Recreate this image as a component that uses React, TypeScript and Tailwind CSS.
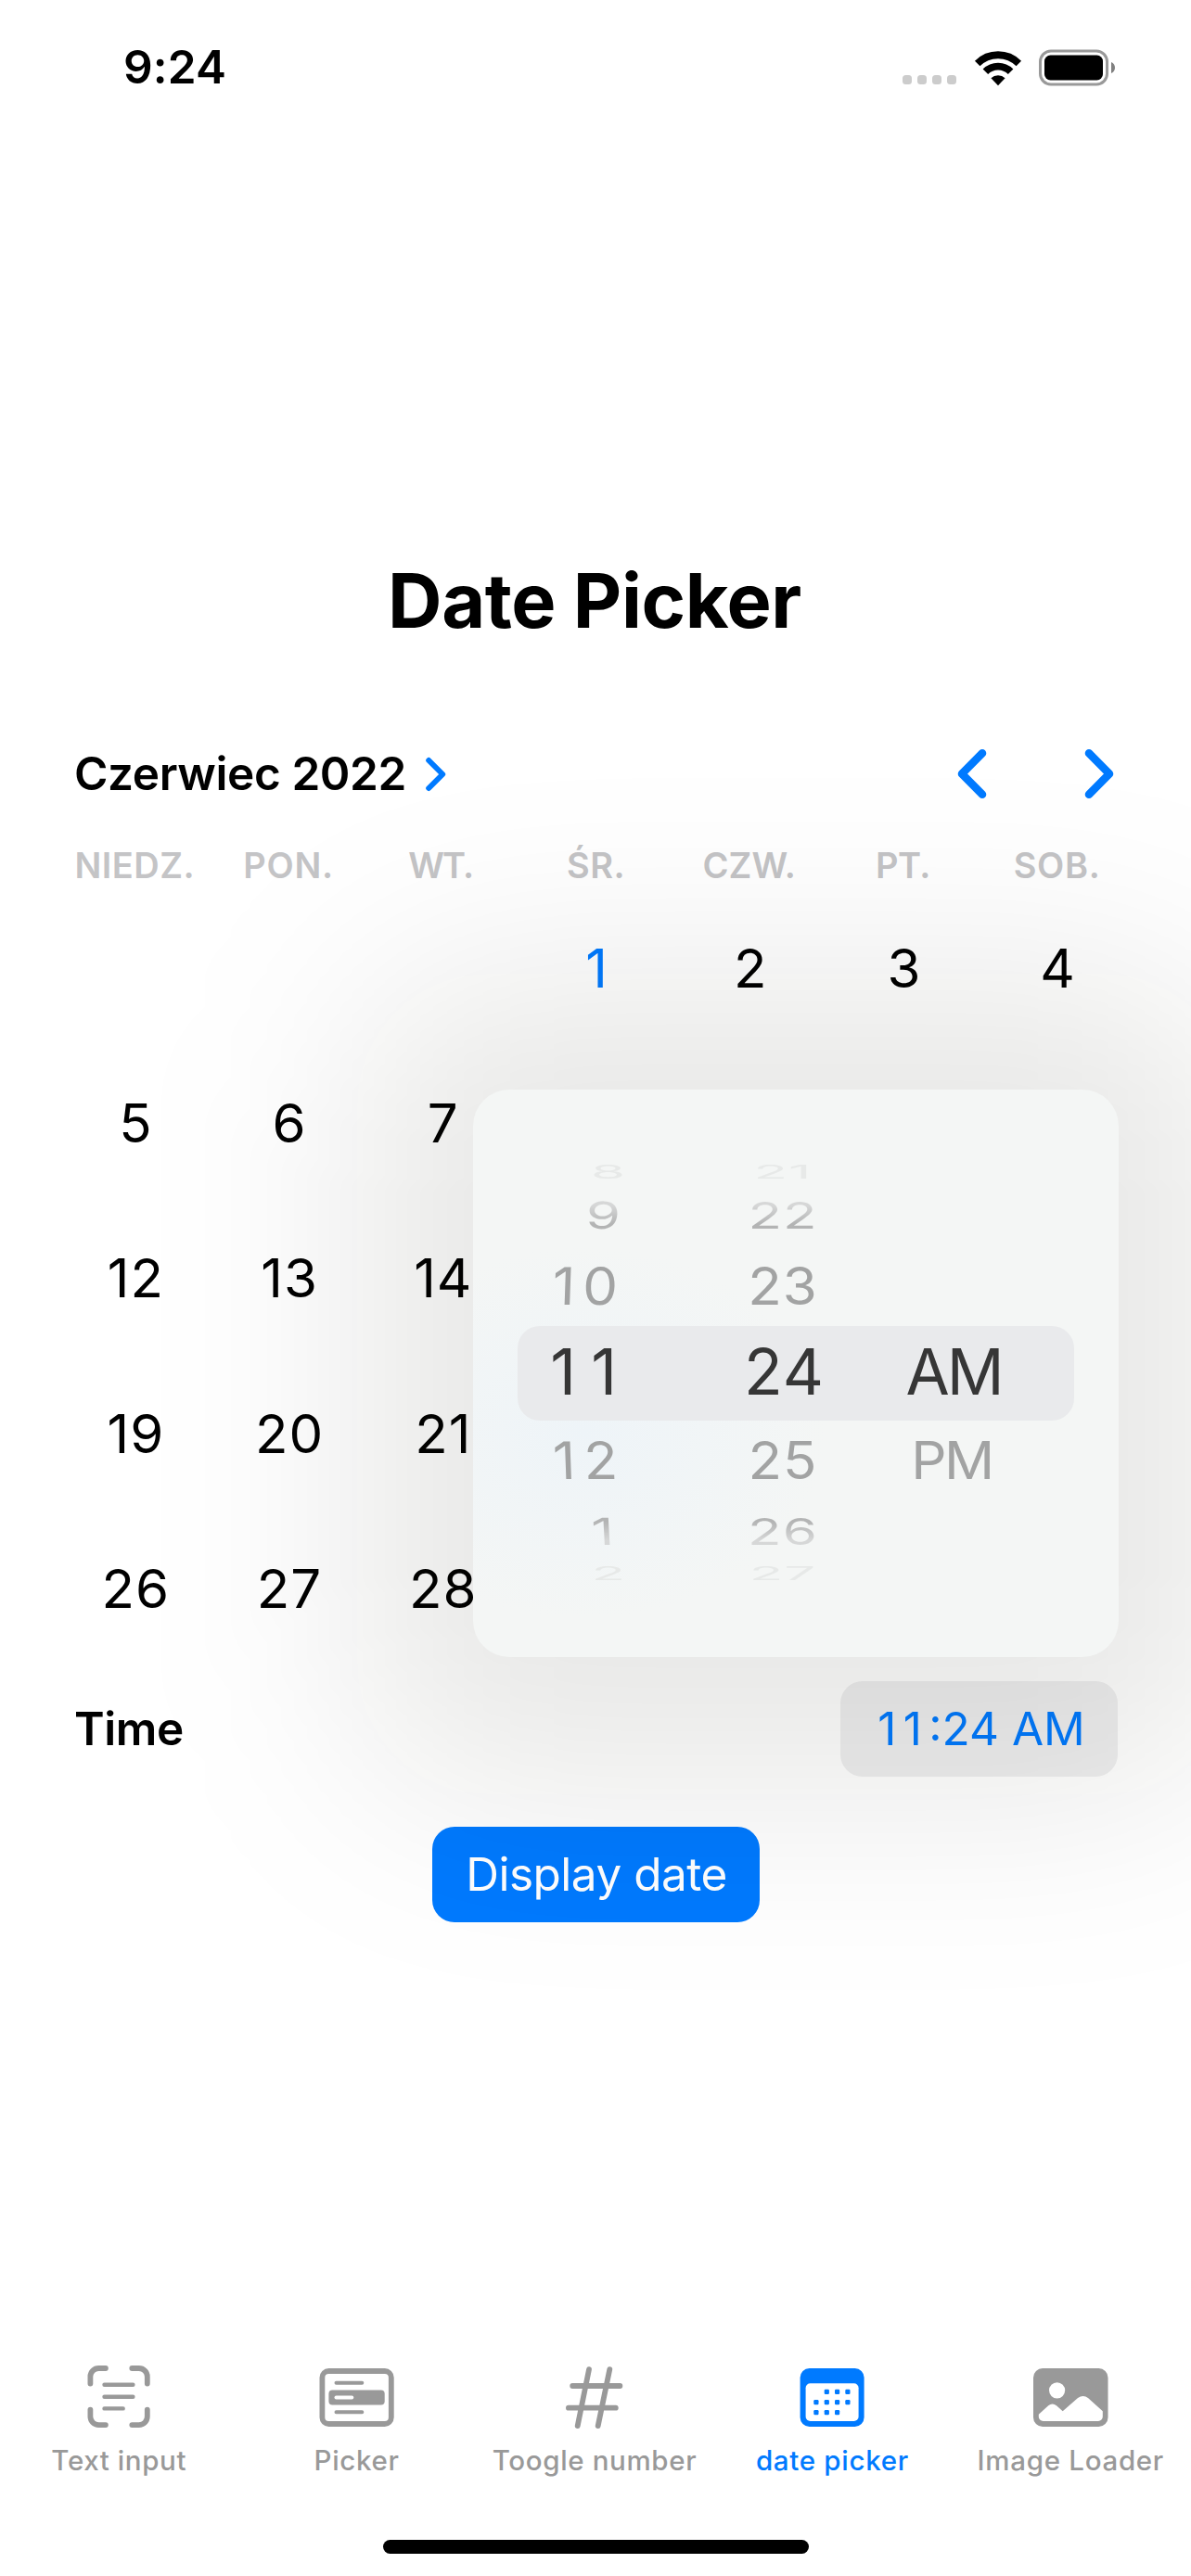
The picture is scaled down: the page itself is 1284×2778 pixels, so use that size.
import type { ReactNode } from "react";
import clsx from "clsx";

const weekdays = [
  { label: "NIEDZ.", className: "tracking-[0.5px]" },
  { label: "PON.", className: "tracking-[0.7px]" },
  { label: "WT.", className: "tracking-[-1.8px] pr-[4px]" },
  { label: "ŚR.", className: "tracking-[0.4px]" },
  { label: "CZW.", className: "tracking-[0.1px] pr-[1px]" },
  { label: "PT.", className: "tracking-[-0.5px] pr-[1px]" },
  { label: "SOB.", className: "tracking-[0.7px]" },
];

// null cells are blank: before the 1st, or behind the open time wheel
const calendarCells: (number | null)[] = [
  null, null, null, 1, 2, 3, 4,
  5, 6, 7, null, null, null, null,
  12, 13, 14, null, null, null, null,
  19, 20, 21, null, null, null, null,
  26, 27, 28, null, null, null, null,
];

const today = 1;

type WheelRow = {
  hour: string;
  minute: string;
  period: string;
  row: string;
  text: string;
  hourText: string;
};

const wheelRows: WheelRow[] = [
  { hour: "8", minute: "21", period: "", row: "h-[25px]", text: "text-[#e7e9e8] scale-y-[0.33]", hourText: "translate-x-[8px]" },
  { hour: "9", minute: "22", period: "", row: "h-[67px]", text: "bg-linear-to-b from-[#d6d7d7] from-25% to-[#b3b4b4] to-75% bg-clip-text text-transparent scale-y-[0.67]", hourText: "translate-x-[3px] -skew-x-3" },
  { hour: "10", minute: "23", period: "", row: "h-[86px]", text: "text-[#a2a3a3] scale-y-[0.93]", hourText: "-skew-x-2 tracking-[8px] -mr-[8px]" },
  { hour: "11", minute: "24", period: "AM", row: "h-[102px]", text: "text-[68.5px] text-[#363636]", hourText: "-translate-x-[1px] tracking-[16px] -mr-[16px]" },
  { hour: "12", minute: "25", period: "PM", row: "h-[86px]", text: "text-[#a2a3a3] scale-y-[0.93]", hourText: "skew-x-2 tracking-[9px] -mr-[9px]" },
  { hour: "1", minute: "26", period: "", row: "h-[67px]", text: "bg-linear-to-b from-[#b3b4b4] from-25% to-[#d6d7d7] to-75% bg-clip-text text-transparent scale-y-[0.67]", hourText: "-translate-x-[4px] skew-x-3" },
  { hour: "2", minute: "27", period: "", row: "h-[25px]", text: "text-[#e7e9e8] scale-y-[0.33]", hourText: "translate-x-[8px]" },
];

function StatusBar() {
  return (
    <header className="flex h-[145px] shrink-0 items-center justify-between pl-[133px] pr-[81px]">
      <span className="text-[49.5px] leading-none font-semibold tracking-[0.2px]">9:24</span>
      <div className="flex h-[40px] items-end">
        <div className="mb-[2px] mr-[20px] flex gap-[6px]">
          {[0, 1, 2, 3].map((i) => (
            <span key={i} className="size-[10px] rounded-[3.5px] bg-[#cccccc]" />
          ))}
        </div>
        <svg className="-ml-px mr-[18px] h-[40px] w-[52px]" viewBox="0 0 52 40">
          <path d="M3.7 15.5a31.5 31.5 0 0 1 44.6 0" fill="none" stroke="#000" strokeWidth="7.8" />
          <path d="M12.4 24.2a19.2 19.2 0 0 1 27.2 0" fill="none" stroke="#000" strokeWidth="7.8" />
          <path d="M26 39.2 18.4 31.2a11 11 0 0 1 15.2 0Z" />
        </svg>
        <svg className="h-[40px] w-[83px]" viewBox="0 0 83 40">
          <rect x="1.5" y="2" width="72" height="36" rx="11.5" fill="none" stroke="#999" strokeWidth="3" />
          <rect x="6" y="6.5" width="63" height="27" rx="6.5" />
          <path d="M78 14c5.4 2 5.4 10 0 12Z" fill="#808080" />
        </svg>
      </div>
    </header>
  );
}

function MonthHeader() {
  return (
    <div className="flex h-[79px] items-center pl-[16.5px] pr-[22.5px]">
      <span className="text-[49.5px] leading-none font-semibold tracking-[-0.4px]">Czerwiec 2022</span>
      <svg className="ml-[20px] h-[38px] w-[24px] text-[#007aff]" viewBox="0 0 24 38">
        <path d="M4.2 4 19.2 19 4.2 34" fill="none" stroke="currentColor" strokeWidth="6" strokeLinecap="round" strokeLinejoin="round" />
      </svg>
      <div className="ml-auto flex gap-[105px] text-[#007aff]">
        <svg className="h-[56px] w-[32px]" viewBox="0 0 32 56">
          <path d="M27 5.3 5 27.5 27 49.7" fill="none" stroke="currentColor" strokeWidth="8.6" strokeLinecap="round" strokeLinejoin="round" />
        </svg>
        <svg className="h-[56px] w-[32px]" viewBox="0 0 32 56">
          <path d="M5 5.3 27 27.5 5 49.7" fill="none" stroke="currentColor" strokeWidth="8.6" strokeLinecap="round" strokeLinejoin="round" />
        </svg>
      </div>
    </div>
  );
}

function Calendar() {
  return (
    <section className="ml-[63.5px] w-[1160px]">
      <MonthHeader />
      <div className="mt-[32px] -ml-px grid h-[54px] w-[1160px] grid-cols-7 items-center text-center text-[38px] leading-none font-semibold text-[#c4c4c6]">
        {weekdays.map((d) => (
          <span key={d.label} className={d.className}>{d.label}</span>
        ))}
      </div>
      <div className="grid grid-cols-7 auto-rows-[167.4px] items-center text-center text-[58.2px] leading-none tracking-[1px]">
        {calendarCells.map((day, i) => (
          <span key={i} className={clsx(day === today && "text-[#007aff]")}>{day}</span>
        ))}
      </div>
    </section>
  );
}

function TimeWheel() {
  return (
    <div className="absolute top-[1175px] left-[510px] h-[611.5px] w-[696px]">
      <div className="absolute -inset-x-[125px] -top-[125px] -bottom-[148px] rounded-[140px] bg-[rgba(12,12,0,0.094)] blur-[112px]" />
      <div className="relative h-full rounded-[39px] bg-[#f4f6f5] bg-[radial-gradient(ellipse_260px_200px_at_120px_370px,#eef4f8,#f4f6f500)] pt-[76.5px]">
        <div className="mx-[48px]">
          {wheelRows.map((r) => (
            <div
              key={r.minute}
              className={clsx(
                "grid grid-cols-[108px_356px_12px_124px] grid-rows-1 items-center text-[60px] leading-none",
                r.row,
                r.minute === "24" && "rounded-[24px] bg-[#e9eaec]",
              )}
            >
              <div className={clsx("flex justify-end whitespace-nowrap", r.hourText)}>
                <span className={r.text}>{r.hour}</span>
              </div>
              <div className={clsx("flex justify-center", r.minute === "24" && "pl-[3px]")}>
                <span className={clsx("tracking-[1px]", r.text)}>{r.minute}</span>
              </div>
              <div className={clsx("flex justify-center whitespace-nowrap", r.period === "PM" && "pr-[4px]")}>
                <span className={clsx(r.period === "PM" ? "tracking-[-2.4px]" : "tracking-[-3px]", r.text)}>{r.period}</span>
              </div>
            </div>
          ))}
        </div>
      </div>
    </div>
  );
}

type TabItemProps = {
  label: string;
  active?: boolean;
  className: string;
  viewBox?: string;
  children: ReactNode;
};

function TabItem({ label, active, className, viewBox = "0 0 100 80", children }: TabItemProps) {
  return (
    <div className={clsx("flex flex-col items-center", active ? "text-[#007aff]" : "text-[#999999]")}>
      <svg className="h-[80px] w-[100px]" viewBox={viewBox} fill="none" stroke="currentColor" strokeLinecap="round" strokeLinejoin="round">
        {children}
      </svg>
      <span className={clsx("mt-[8px] text-[29.5px] leading-[40px] font-medium whitespace-nowrap", className)}>{label}</span>
    </div>
  );
}

function TabBar() {
  return (
    <nav className="grid h-[194px] w-[1282px] shrink-0 grid-cols-5">
      <TabItem label="Text input" className="tracking-[0.6px]">
        <path strokeWidth="5.8" d="M19.4 25.5V18a9 9 0 0 1 9-9h7.5M64.3 9h7.5a9 9 0 0 1 9 9v7.5M80.8 53.6v7.5a9 9 0 0 1-9 9h-7.5M35.9 70.1h-7.5a9 9 0 0 1-9-9v-7.5" />
        <path strokeWidth="4.4" d="M34.5 26.8h30.9M34.5 39.7h30.9M34.5 52.4h20.2" />
      </TabItem>
      <TabItem label="Picker" className="tracking-[0.7px]" viewBox="-0.6 0 100 80">
        <rect x="11.8" y="12" width="74.4" height="57" rx="7" strokeWidth="5.8" />
        <path strokeWidth="4" d="M26.9 24.8h27.8M26.9 56.3h27.8" />
        <rect x="18.8" y="32.4" width="60.3" height="16" rx="4" fill="currentColor" stroke="none" />
        <path stroke="#fff" strokeWidth="4" d="M26.9 40.6h16.8" />
      </TabItem>
      <TabItem label="Toogle number" className="tracking-[0.65px]" viewBox="-1 0 100 80">
        <path strokeWidth="5.8" d="M43 10.2 30.7 71.1M65.3 10.2 52.7 71.1M25.2 28h51.2M20.9 51.7h50.9" />
      </TabItem>
      <TabItem label="date picker" active className="tracking-[0.7px]" viewBox="-1.4 0 100 80">
        <rect x="14.2" y="9" width="69" height="63" rx="10" fill="currentColor" stroke="none" />
        <rect x="20.2" y="25.2" width="57" height="40.8" rx="5" fill="#fff" stroke="none" />
        {[
          [42.9, 34.4], [54.2, 34.4], [65.5, 34.4],
          [31.5, 45.6], [42.9, 45.6], [54.2, 45.6], [65.5, 45.6],
          [31.5, 56.7], [42.9, 56.7], [54.2, 56.7],
        ].map(([x, y]) => (
          <rect key={`${x}-${y}`} x={x - 2.6} y={y - 2.6} width="5.2" height="5.2" rx="1.2" fill="currentColor" stroke="none" />
        ))}
      </TabItem>
      <TabItem label="Image Loader" className="tracking-[0.7px] pl-[1px]">
        <rect x="10" y="9" width="80.5" height="63" rx="10" fill="currentColor" stroke="none" />
        <circle cx="35.6" cy="32.8" r="8.6" fill="#fff" stroke="none" />
        <path fill="#fff" stroke="none" d="M15.8 58.8 26.2 49.2q4.4-3.4 8.8 0L41.7 55.2 58 41q5.8-4.2 11 0L84.8 55.2v6a4.8 4.8 0 0 1-4.8 4.8H20.6a4.8 4.8 0 0 1-4.8-4.8Z" />
      </TabItem>
    </nav>
  );
}

export default function App() {
  return (
    <div className="relative flex h-[2778px] w-[1284px] flex-col overflow-hidden bg-white font-['Inter',sans-serif] text-black">
      <StatusBar />
      <h1 className="mt-[453px] h-[99px] pr-[2px] text-center text-[81px] leading-[100px] font-bold tracking-[-0.4px]">Date Picker</h1>
      <div className="mt-[98px]">
        <Calendar />
      </div>
      <div className="mt-[16px] flex h-[103px] items-center justify-between pl-[80px] pr-[79px]">
        <span className="text-[49.5px] leading-none font-semibold tracking-[-0.4px]">Time</span>
        <button className="h-[103px] w-[299px] rounded-[24px] bg-[#efeff0] pl-[5px] text-[49.5px] leading-none whitespace-nowrap text-[#007aff]">
          <span className="tracking-[7.4px]">11</span>:24 AM
        </button>
      </div>
      <button className="mt-[54px] h-[103px] w-[353px] self-center rounded-[24px] bg-[#007aff] pl-[2px] text-[49.5px] leading-none tracking-[-0.5px] text-white">
        Display date
      </button>
      <TimeWheel />
      <div className="flex-1" />
      <TabBar />
      <div className="mb-[24px] h-[15px] w-[459px] shrink-0 self-center rounded-full bg-black" />
    </div>
  );
}
